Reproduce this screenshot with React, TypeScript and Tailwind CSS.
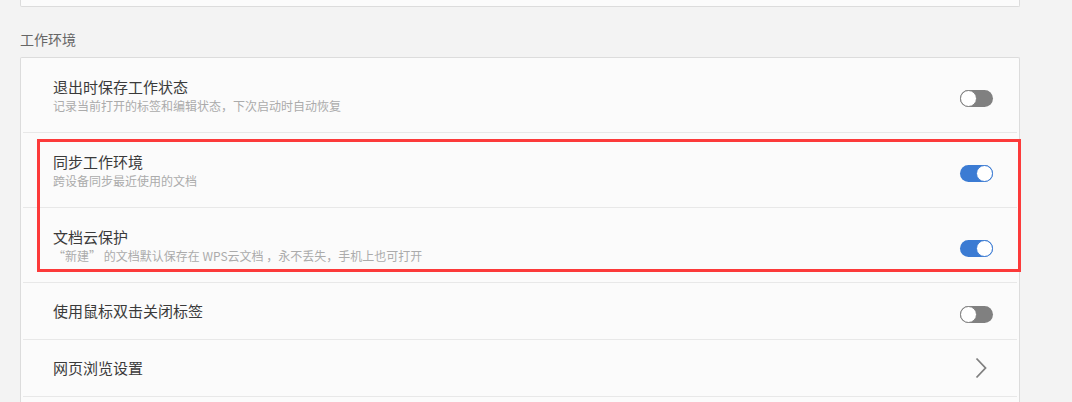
const rows = [
  {
    title: "退出时保存工作状态",
    description: "记录当前打开的标签和编辑状态，下次启动时自动恢复",
    kind: "toggle",
    on: false,
  },
  {
    title: "同步工作环境",
    description: "跨设备同步最近使用的文档",
    kind: "toggle",
    on: true,
  },
  {
    title: "文档云保护",
    description: "“新建” 的文档默认保存在 WPS云文档 ，永不丢失，手机上也可打开",
    kind: "toggle",
    on: true,
  },
  {
    title: "使用鼠标双击关闭标签",
    description: "",
    kind: "toggle",
    on: false,
  },
  {
    title: "网页浏览设置",
    description: "",
    kind: "link",
    on: false,
  },
];

function Toggle({ on }: { on: boolean }) {
  return (
    <div
      className={
        on
          ? "mt-[7px] flex h-[17px] w-[33px] items-center justify-end rounded-full bg-[#3b7bd3]"
          : "mt-[7px] flex h-[17px] w-[33px] items-center justify-start rounded-full bg-[#808080]"
      }
    >
      <div
        className={
          on
            ? "h-[17px] w-[17px] rounded-full border border-[#3b7bd3] bg-white"
            : "h-[17px] w-[17px] rounded-full border border-[#808080] bg-white"
        }
      />
    </div>
  );
}

function Chevron() {
  return (
    <svg width="12" height="22" viewBox="0 0 12 22" className="mr-[6px]">
      <polyline
        points="1.5,1.5 10.5,11 1.5,20.5"
        fill="none"
        stroke="#7f7f7f"
        strokeWidth="1.8"
      />
    </svg>
  );
}

export default function App() {
  return (
    <div className="relative h-[402px] w-[1072px] overflow-hidden bg-[#f3f3f3] pl-[20px] font-['Noto_Sans_CJK_SC',sans-serif]">
      {/* previous card, cut off */}
      <div className="h-[7px] w-[1000px] rounded-b-[2px] border border-t-0 border-[#dcdcdc] bg-[#fbfbfb]" />

      <h2 className="mb-[8px] pt-[22px] text-[14px] leading-[20px] text-[#666666]">
        工作环境
      </h2>

      <div className="w-[1000px] rounded-t-[2px] border border-b-0 border-[#dcdcdc] bg-[#fbfbfb]">
        {rows.map((row) => (
          <div key={row.title}>
            <div
              className={
                row.description
                  ? "flex h-[74px] items-center justify-between pl-[32px] pr-[26px]"
                  : "flex h-[56px] items-center justify-between pl-[32px] pr-[26px]"
              }
            >
              <div className={row.description ? "self-start pt-[19px]" : ""}>
                <div className="text-[15px] leading-[20px] text-[#3a3a3a]">
                  {row.title}
                </div>
                {row.description && (
                  <div className="mt-[1px] text-[12px] leading-[16px] text-[#ababab]">
                    {row.description}
                  </div>
                )}
              </div>
              {row.kind === "toggle" ? <Toggle on={row.on} /> : <Chevron />}
            </div>
            <div className="mx-[2px] h-px bg-[#e8e8e8]" />
          </div>
        ))}
        <div className="h-[10px]" />
      </div>

      {/* highlight annotation */}
      <div className="absolute left-[37px] top-[139px] h-[133px] w-[984px] border-[3px] border-[#fc3a3a]" />
    </div>
  );
}
